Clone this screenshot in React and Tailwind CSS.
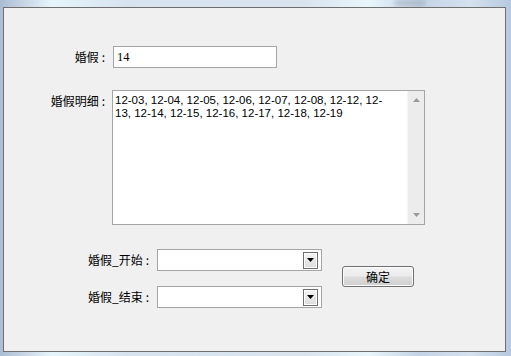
import React from "react";

const cjk = { fontFamily: '"Noto Sans CJK SC", "Liberation Sans", sans-serif' };

function Label({ w, text, extra = "" }) {
  return (
    <div className={`${w} ${extra} flex justify-end items-center leading-[14px]`}>
      <span>{text}</span>
      <span className="ml-[3px] mr-[1px]">:</span>
    </div>
  );
}

function Combo() {
  return (
    <div className="ml-[7px] w-[165px] h-[22px] bg-white border border-[#a5a5a5] flex items-center justify-end pr-[3px]">
      <div className="w-[15px] h-[17px] border border-[#6e6e6e] bg-[linear-gradient(180deg,#f4f4f4,#dcdcdc)] flex items-center justify-center shadow-[inset_0_0_0_1px_#ffffff]">
        <svg width="7" height="4" viewBox="0 0 7 4"><path d="M0 0H7L3.5 4Z" fill="#000" /></svg>
      </div>
    </div>
  );
}

export default function App() {
  return (
    <div className="w-[511px] h-[356px] overflow-hidden relative bg-[linear-gradient(90deg,#aabdd3_0%,#c9d7e7_5%,#e6f5fb_10%,#d7e3ef_25%,#d9e4ef_60%,#e9f6fb_72%,#c3d3e6_82%,#d5e1ee_92%,#b6c9df_100%)]">
      <div className="absolute left-[395px] top-0 w-[30px] h-[6px] bg-[#8a96a3] opacity-40 blur-[2px]" />
      <div className="mt-[7px] ml-[3px] w-[503px] h-[345px] border border-[#6f6f6f] bg-[#f0f0f0] relative text-[12px] text-black" style={cjk}>
        {/* Row 1 */}
        <div className="mt-[38px] flex items-center">
          <Label w="w-[102px]" text="婚假" />
          <div className="ml-[7px] w-[164px] h-[22px] bg-white border border-[#a5a5a5] flex items-center pl-[3px] text-[12.5px] leading-none" style={{ fontFamily: '"Liberation Serif", serif' }}>
            14
          </div>
        </div>
        {/* Row 2 */}
        <div className="mt-[22px] flex items-start">
          <Label w="w-[102px]" text="婚假明细" extra="pt-[4px]" />
          <div className="ml-[6px] w-[313px] h-[135px] bg-white border border-[#a5a5a5] flex">
            <div className="flex-1 pl-[2px] pt-[3px] text-[11.5px] leading-[13px] whitespace-pre" style={{ fontFamily: '"Liberation Sans", sans-serif' }}>
              <div>12-03, 12-04, 12-05, 12-06, 12-07, 12-08, 12-12, 12-</div>
              <div>13, 12-14, 12-15, 12-16, 12-17, 12-18, 12-19</div>
            </div>
            <div className="w-[17px] h-full bg-[#ececec] border-l border-[#f7f7f7] flex flex-col items-center justify-between py-[7px]">
              <svg width="7" height="4" viewBox="0 0 7 4"><path d="M3.5 0L7 4H0Z" fill="#9a9a9a" /></svg>
              <svg width="7" height="4" viewBox="0 0 7 4"><path d="M0 0H7L3.5 4Z" fill="#9a9a9a" /></svg>
            </div>
          </div>
        </div>
        {/* Row 3 */}
        <div className="mt-[24px] flex items-start">
          <div className="flex flex-col">
            <div className="flex items-center">
              <Label w="w-[146px]" text="婚假_开始" />
              <Combo />
            </div>
            <div className="mt-[15px] flex items-center">
              <Label w="w-[146px]" text="婚假_结束" />
              <Combo />
            </div>
          </div>
          <div className="ml-[20px] mt-[17px] w-[72px] h-[21px] rounded-[3px] border border-[#707070] bg-[linear-gradient(180deg,#f3f3f3_0%,#ebebeb_48%,#dddddd_52%,#cfcfcf_100%)] shadow-[inset_0_0_0_1px_#fcfcfc] flex items-center justify-center leading-none">
            确定
          </div>
        </div>
      </div>
    </div>
  );
}
